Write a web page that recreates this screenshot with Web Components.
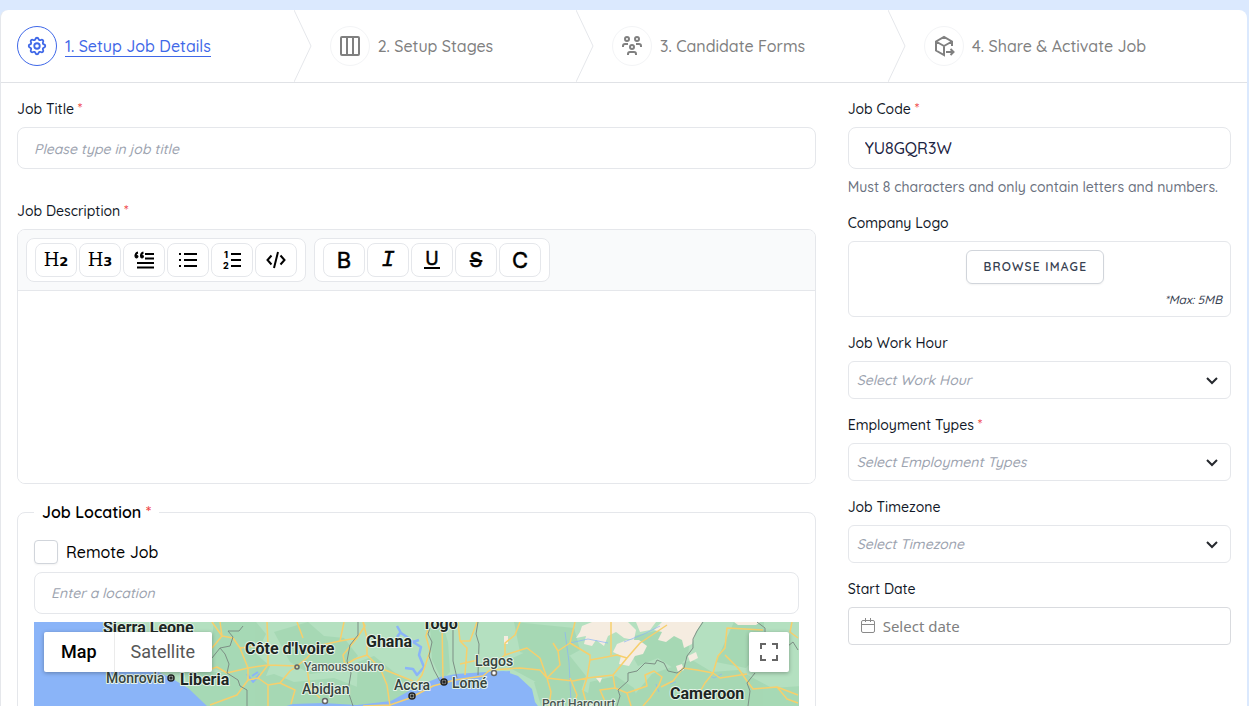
<!DOCTYPE html>
<html lang="en">
<head>
<meta charset="utf-8">
<meta name="viewport" content="width=device-width, initial-scale=1">
<title>Setup Job Details</title>
<style>
html, body { height: 100%; }
body { margin: 0; background: #dbe9fe; color: #111827; font: 500 16px/24px "Quicksand", "Lato", sans-serif; overflow: hidden; }
</style>
</head>
<body>
<job-setup-page></job-setup-page>

<template id="t-page">
  <style>
    :host { display: block; height: 100%; box-sizing: border-box; padding: 10px 2px 0 0; overflow-y: auto; scrollbar-width: none; }
    main { background: #fff; border-left: 1px solid #e5e7eb; border-radius: 8px 8px 0 0; min-height: 100%; box-sizing: border-box; }
    form { display: grid; grid-template-columns: repeat(3, minmax(0, 1fr)); gap: 32px; padding: 16px; }
    .primary { grid-column: span 2; display: flex; flex-direction: column; gap: 32px; min-width: 0; }
    .block { display: flex; flex-direction: column; gap: 16px; }
    .side { display: flex; flex-direction: column; gap: 16px; min-width: 0; }
  </style>
  <main>
    <step-bar>
      <step-item href="#details" icon="cog" active>1. Setup Job Details</step-item>
      <step-item href="#stages" icon="columns">2. Setup Stages</step-item>
      <step-item href="#forms" icon="people">3. Candidate Forms</step-item>
      <step-item href="#share" icon="box" last>4. Share &amp; Activate Job</step-item>
    </step-bar>
    <form>
      <div class="primary">
        <text-field label="Job Title" required placeholder="Please type in job title"></text-field>
        <div class="block">
          <rich-editor></rich-editor>
          <job-location></job-location>
        </div>
      </div>
      <div class="side">
        <text-field label="Job Code" required value="YU8GQR3W">Must 8 characters and only contain letters and numbers.</text-field>
        <logo-upload></logo-upload>
        <select-field label="Job Work Hour" placeholder="Select Work Hour"></select-field>
        <select-field label="Employment Types" required placeholder="Select Employment Types"></select-field>
        <select-field label="Job Timezone" placeholder="Select Timezone"></select-field>
        <date-field label="Start Date" placeholder="Select date"></date-field>
      </div>
    </form>
  </main>
</template>

<template id="t-location">
  <style>
    :host { display: block; }
    fieldset { margin: 0; padding: 16px; border: 1px solid #e5e7eb; border-radius: 8px; min-width: 0; }
    legend { padding: 0 8px; font: 600 16px/24px "Quicksand", "Lato", sans-serif; color: #000; }
    legend span { color: #ef4444; }
    .stack { display: flex; flex-direction: column; gap: 8px; }
    .remote { display: flex; align-items: center; gap: 8px; color: #000; }
    .remote input { appearance: none; margin: 0; width: 24px; height: 24px; border: 1px solid #d1d5db; border-radius: 4px; background: #fff; box-shadow: 0 1px 2px #0000000d; }
    .place { box-sizing: border-box; width: 100%; height: 42px; padding: 0 16px; border: 1px solid #e5e7eb; border-radius: 8px; font: 500 14px/20px "Quicksand", "Lato", sans-serif; }
    .place::placeholder { color: #9ca3af; font-style: italic; opacity: 1; }
  </style>
  <fieldset>
    <legend>Job Location <span>*</span></legend>
    <div class="stack">
      <label class="remote"><input type="checkbox">Remote Job</label>
      <input class="place" type="text" aria-label="Location" placeholder="Enter a location">
      <location-map></location-map>
    </div>
  </fieldset>
</template>

<template id="t-map">
  <style>
    :host { display: block; position: relative; height: 400px; overflow: hidden; background: #b0dfbd; font-family: Roboto, sans-serif; }
    .canvas { display: block; }
    .kinds { position: absolute; top: 10px; left: 10px; display: flex; background: #fff; border-radius: 2px; box-shadow: 0 1px 4px #0000004d; }
    .kinds button { border: 0; background: none; height: 40px; padding: 0 17px; font: 400 18px/40px Roboto, sans-serif; color: #565656; }
    .kinds button + button { box-shadow: inset 1px 0 #ebebeb; }
    .kinds .on { font-weight: 500; color: #000; }
    .full { position: absolute; top: 10px; right: 10px; width: 40px; height: 40px; padding: 11px; border: 0; border-radius: 2px; background: #fff; box-shadow: 0 1px 4px #0000004d; }
    .full svg { display: block; }
    .land2 { fill: #9dd4ad; opacity: .6; }
    .dry { fill: #f5ece0; }
    .road { fill: none; stroke: #f7cf6c; stroke-width: 1.5; stroke-linejoin: round; }
    .edge { fill: none; stroke: #7d8f85; stroke-width: 1; stroke-linejoin: round; }
    .water { fill: none; stroke: #8ab4f8; stroke-width: 1; stroke-linejoin: round; }
    text { paint-order: stroke; stroke: #e5f3e8; stroke-width: 2px; stroke-linejoin: round; fill: #1d2623; }
    .country { font-size: 16px; font-weight: 700; }
    .city { font-size: 14px; font-weight: 500; fill: #36433e; }
    .town { font-size: 12px; font-weight: 500; fill: #4a5752; }
  </style>
  <svg class="canvas" width="1600" height="400" viewBox="0 0 1600 400" aria-label="Map of West Africa">
    <rect width="1600" height="400" fill="#b4e0c0"/>
    <g class="land2">
      <path d="M180 0h42l10 12-10 20 14 12-8 20-20 8-14-22-20-4zM240 10l34-10 16 14 20 2 14 18-16 14-32 4-20-12zM150 50h40l20 10 30-8 20 8 40-4 26 10 34-6 18 8-10 14-140 10H160z"/>
      <path d="M324 40l16-6 20 16 18 10-6 14-50 8zM396 4l12-4 6 20 2 30-8 8-10-20zM470 40l30-14 36 8 16 20-10 30h-26l-14-24-26-14zM480 0l60 6 6 22-22 12-38-10zM556 60l26-6 18 12 10 30h-60z"/>
      <path d="M596 78l22-26 40-14 20 12 26-2 34 18 61-4v50H590zM600 14l34-8 22 8-2 20-12 14-18-12-20 8-8-14zM700 0h30v26l-18 20-30-6z"/>
      <path d="M500 60l14-2 26 6 20 10 6 20h-56z"/>
    </g>
    <g class="dry">
      <path d="M548 4l10-4h36l8 8-2 10-10-2-8-6-8 4-4 10-8-6-4 6-8-2 2-8-10 2 4-6z"/>
      <path d="M583 22l10-4 12 0 8 6-4 8-8 2-6 10-10-2 2-8-8-4z"/>
      <path d="M628 0h40l-6 10-4 12-8 4-2-8-8-4-8 6-8-2 4-8-8-2zM654 34l8-4 2 6-8 4zM470 14h4v8h-4zM562 56h6l-2 5zM602 0h20l-6 8-10 2z"/>
      <path d="M642 44l6-2 2 6-6 2zM700 0h26l-4 3h-18z"/>
    </g>
    <path d="M0 0H76l10 10 8 20 18 14 25 12 17 10 19 18 16 18 22 4 22-16 26-8 30-1 34 2 34-4 25-14 24-10 16-3 30-2 18-1 14 5 14 13 3 13 10 14 8 36 24 6 60-2 24 60 0 200H0z" fill="#8ab4f8"/>
    <g class="water">
      <path d="M363 4l4 7 6 4 6 5 8 5-2 8 5 12-7 8-4-6-8-1M366 11l-3 4M379 20l6-2" stroke-width="2.500"/>
      <path d="M213 52l6 8 7-8M224 50l-6 4M462 51l14-1" stroke-width="2"/>
      <path d="M590 20l20-8 16-8M536 21l18-4 20 4M531 10l4 30 2 40M642 60l-6 2M676 54l4 2 8-4M622 62l3 8" opacity=".7"/>
    </g>
    <g class="road">
      <path d="M178 0l10 14 11 2 7 10 8 20-21 5-10-6-12 4M186 0l2 14-10 12M214 46l20-3 29 1 10-8 10-12 23-5 17-3-14 17 2 10M233 0l1 23v20l-10 13 10 7v21M234 63l12-2 10-12 7-5M246 61l15 7-4 14M263 0l6 16M273 46l3 20 10 10M276 66l20 6 18-4M214 46v12l-11 15-27 10M206 26l28-3M214 58l10-2M311 43l-18 4-20-3"/>
      <path d="M306 19l4-19M323 16l8-12-2-4M329 0l4 16v17l13 13 33 13M333 33l-12 4-10 6M346 46l7 17 3 21M329 84l27-1 20-7 23-12 22-6 28-4 7-6 30-2 20 2 7 8M396 0l-4 14 4 15-8 24-10 14M408 0l1 59M424 0l2 19 7 7-2 27M443 0l-7 19-10 0M426 42l18-4M486 0l-5 13-10 8v12l-10 8-14 4M471 33l22-7 13 10 7 20"/>
      <path d="M541 0l-5 21-12 8 2 14-13 13M519 21l5 8M536 21l20 12v5l27-5 10 3 13-15 27-18M577 0v33M556 38l-3 18-14 3-26-3M553 56l26-3 14-17M536 56l7 17-4 11M553 56l-4 13 4 15M579 53l2 13-15 2 7 16M513 56l4 14-2 14M581 66l12 5 20-7-2-11 9-4 8 6-3 8-9 13-7 8M593 71l4 13"/>
      <path d="M639 59l10-13 14 2 16 3 5-17 7-8 2-20 36 2M691 33l13 13 9 13M679 51l7 5 27-4M679 51l-8 10-8 14M713 59l6 8 24-2 21 8M758 0l-2 10 8 6M639 59l-12 6M743 65l10 12 11 4"/>
    </g>
    <g class="edge">
      <path d="M209 4l-4 5-11 0 5 6-3 9-10 2 5 6 4 10-2 9 11 7 2 6 7 4v16M186 26l-8 10M324 0v13l-8 10-3 16 4 12-3 18 5 15"/>
      <path d="M396 6l-2 6 4 8-3 14 5 14 6 11M419 0v39l4 17M444 0l-2 12 3 10-1 31"/>
      <path d="M669 0l-6 9-4 8v9l-6 8-3 12-7 5-9-2-4-8-7-3-2 4-10-1-8 8-9 2 0 8-10 9 2 6-3 10M723 0l8 6v10M721 51l-8 10 3 8-2 15M754 24l5-4 5 8"/>
    </g>
    <g fill="none" stroke="#222" stroke-width="1.500">
      <circle cx="137" cy="56" r="3" fill="#dfe8e2"/><circle cx="137" cy="56" r="1"/>
      <circle cx="378" cy="74" r="3" fill="#dfe8e2"/><circle cx="378" cy="74" r="1"/>
      <circle cx="410" cy="60" r="3" fill="#aaa"/><circle cx="410" cy="60" r="1"/>
      <g stroke="#666"><circle cx="263" cy="45" r="2"/><circle cx="460" cy="51" r="2.500" fill="#fff"/><circle cx="291" cy="79" r="2.500" fill="#fff"/></g>
    </g>
    <text class="country" x="69" y="11">Sierra Leone</text>
    <text class="country" x="146" y="63">Liberia</text>
    <text class="country" x="211" y="32">Côte d'Ivoire</text>
    <text class="country" x="332" y="25">Ghana</text>
    <text class="country" x="388" y="7">Togo</text>
    <text class="country" x="636" y="77">Cameroon</text>
    <text class="city" x="72" y="61">Monrovia</text>
    <text class="city" x="268" y="72">Abidjan</text>
    <text class="city" x="360" y="68">Accra</text>
    <text class="city" x="418" y="66">Lomé</text>
    <text class="city" x="441" y="44">Lagos</text>
    <text class="town" x="270" y="49">Yamoussoukro</text>
    <text class="town" x="508" y="86">Port Harcourt</text>
  </svg>
  <div class="kinds"><button type="button" class="on">Map</button><button type="button">Satellite</button></div>
  <button type="button" class="full" aria-label="Toggle fullscreen view"><svg width="18" height="18" viewBox="0 0 18 18" fill="#666"><path d="M0 0v6h2V2h4V0zM18 0h-6v2h4v4h2zM16 16h-4v2h6v-6h-2zM2 12H0v6h6v-2H2z"/></svg></button>
</template>

<script>
const FONT = '"Quicksand", "Lato", sans-serif';
const ICONS = {
  cog: '<path d="M10.325 4.317c.426-1.756 2.924-1.756 3.35 0a1.724 1.724 0 0 0 2.573 1.066c1.543-.94 3.31.826 2.37 2.37a1.724 1.724 0 0 0 1.065 2.572c1.756.426 1.756 2.924 0 3.35a1.724 1.724 0 0 0-1.066 2.573c.94 1.543-.826 3.31-2.37 2.37a1.724 1.724 0 0 0-2.572 1.065c-.426 1.756-2.924 1.756-3.35 0a1.724 1.724 0 0 0-2.573-1.066c-1.543.94-3.31-.826-2.37-2.37a1.724 1.724 0 0 0-1.065-2.572c-1.756-.426-1.756-2.924 0-3.35a1.724 1.724 0 0 0 1.066-2.573c-.94-1.543.826-3.31 2.37-2.37 1 .608 2.296.07 2.572-1.065z"/><circle cx="12" cy="12" r="3"/>',
  columns: '<rect x="3" y="3" width="18" height="18" rx="1"/><path d="M9 3v18M15 3v18"/>',
  people: '<circle cx="7" cy="5" r="2"/><circle cx="17" cy="5" r="2"/><circle cx="12" cy="13" r="2"/><path d="M3 13v-1a2 2 0 0 1 2-2h3M21 13v-1a2 2 0 0 0-2-2h-3M8 21v-1a2 2 0 0 1 2-2h4a2 2 0 0 1 2 2v1"/>',
  box: '<path d="M20 12V7.500l-8-4.500-8 4.500v9l8 4.500V12l8-4.500M12 12L4 7.500M14 18h7M18.500 15l3 3-3 3"/>'
};
const fromTemplate = id => document.getElementById(id).innerHTML;

class Base extends HTMLElement {
  connectedCallback() {
    if (!this.shadowRoot) this.attachShadow({ mode: 'open' }).innerHTML = this.render();
  }
  get star() { return this.hasAttribute('required') ? ' <i class="star">*</i>' : ''; }
}
const FIELD = `
  :host { display: flex; flex-direction: column; gap: 8px; }
  .label { font: 500 14px/20px ${FONT}; color: #111827; }
  .star { color: #ef4444; font-style: normal; }
`;

customElements.define('step-bar', class extends Base {
  render() {
    return `<style>
      :host { display: block; border-bottom: 1px solid #e0e2e6; }
      nav { display: flex; height: 72px; }
    </style><nav aria-label="Steps"><slot></slot></nav>`;
  }
});

customElements.define('step-item', class extends Base {
  render() {
    const active = this.hasAttribute('active');
    return `<style>
      :host { display: flex; flex: 1 1 auto; justify-content: space-between; padding-left: 18px; color: #808080; }
      :host([active]) { padding-left: 16px; color: #3f68e8; }
      :host([last]) { padding-right: 18px; }
      a { display: flex; align-items: center; gap: 8px; color: inherit; text-decoration: none; white-space: nowrap; }
      .disc { display: grid; place-items: center; width: 38px; height: 38px; border: 1px solid #f3f4f6; border-radius: 50%; }
      :host([active]) .disc { border-color: #3f68e8; }
      .disc svg { fill: none; stroke: currentColor; stroke-width: 2; }
      .text { font: 500 16px/20px ${FONT}; border-bottom: 1px solid transparent; }
      :host([active]) .text { border-color: currentColor; }
      .chevron { fill: none; stroke: #e5e7eb; }
    </style>
    <a href="${this.getAttribute('href')}"${active ? ' aria-current="step"' : ''}>
      <span class="disc"><svg width="${active ? 22 : 24}" height="${active ? 22 : 24}" viewBox="0 0 24 24">${ICONS[this.getAttribute('icon')]}</svg></span>
      <span class="text"><slot></slot></span>
    </a>
    ${this.hasAttribute('last') ? '' : '<svg class="chevron" width="18" height="72" viewBox="0 0 18 72"><path d="M0 0l17 36L0 72"/></svg>'}`;
  }
});

customElements.define('text-field', class extends Base {
  render() {
    return `<style>${FIELD}
      input { box-sizing: border-box; width: 100%; height: 42px; padding: 0 16px; border: 1px solid #e5e7eb; border-radius: 8px; background: #fff; font: 500 16px/24px ${FONT}; color: #1b2342; }
      input::placeholder { color: #9ca3af; font-size: 14px; font-style: italic; opacity: 1; }
      .hint { font-size: 14px; line-height: 20px; color: #6b7280; }
    </style>
    <label class="label" for="f">${this.getAttribute('label')}${this.star}</label>
    <input id="f" type="text" value="${this.getAttribute('value') || ''}" placeholder="${this.getAttribute('placeholder') || ''}">
    ${this.textContent.trim() ? '<div class="hint"><slot></slot></div>' : ''}`;
  }
});

customElements.define('select-field', class extends Base {
  render() {
    return `<style>${FIELD}
      .box { display: grid; }
      .box > * { grid-area: 1 / 1; }
      select { appearance: none; width: 100%; height: 38px; padding: 0 8px; border: 1px solid #e5e7eb; border-radius: 6px; background: #fff; font: italic 500 14px/20px ${FONT}; color: #9ca3af; }
      svg { justify-self: end; align-self: center; margin-right: 12px; fill: none; stroke: #26292e; stroke-width: 2; pointer-events: none; }
    </style>
    <label class="label" for="f">${this.getAttribute('label')}${this.star}</label>
    <div class="box"><select id="f"><option>${this.getAttribute('placeholder')}</option></select>
    <svg width="14" height="14" viewBox="0 0 14 14"><path d="M2 5l5 5 5-5"/></svg></div>`;
  }
});

customElements.define('date-field', class extends Base {
  render() {
    return `<style>${FIELD}
      .box { display: flex; align-items: center; gap: 8px; box-sizing: border-box; height: 38px; padding: 0 12px; border: 1px solid #d9dbdf; border-radius: 4px; }
      svg { fill: none; stroke: #8a8a8a; flex: none; }
      input { flex: 1; min-width: 0; border: 0; padding: 0; background: none; font: 400 15px/24px "Noto Sans", sans-serif; outline: 0; }
      input::placeholder { color: #808080; opacity: 1; }
    </style>
    <label class="label" for="f">${this.getAttribute('label')}</label>
    <div class="box"><svg width="14" height="16" viewBox="0 0 14 16"><rect x=".5" y="2.500" width="13" height="12" rx="1.500"/><path d="M.5 6.500h13M4.500 0v4M9.500 0v4"/></svg>
    <input id="f" type="text" placeholder="${this.getAttribute('placeholder')}"></div>`;
  }
});

customElements.define('logo-upload', class extends Base {
  render() {
    return `<style>${FIELD}
      .box { display: flex; flex-direction: column; align-items: center; gap: 8px; box-sizing: border-box; height: 76px; padding: 8px; border: 1px solid #e5e7eb; border-radius: 6px; }
      button { height: 34px; margin: 0 8px 0 0; padding: 0 16px; border: 1px solid #d1d5db; border-radius: 6px; background: #fff; font: 600 12px/16px ${FONT}; letter-spacing: .1em; text-transform: uppercase; color: #374151; box-shadow: 0 1px 2px #0000000d; flex: none; }
      small { align-self: flex-end; font: italic 500 12px/16px ${FONT}; color: #374151; }
    </style>
    <span class="label">Company Logo</span>
    <div class="box"><button type="button">Browse Image</button><small>*Max: 5MB</small></div>`;
  }
});

customElements.define('tool-button', class extends Base {
  render() {
    return `<style>
      :host { display: block; }
      button { display: grid; place-items: center; box-sizing: border-box; width: 42px; height: 34px; padding: 0; border: 1px solid #e5e7eb; border-radius: 8px; background: #fff; color: #000; font: 400 22px/24px Inter, sans-serif; }
      ::slotted(svg) { display: block; fill: none; stroke: #000; stroke-width: 2; }
    </style><button type="button" aria-label="${this.getAttribute('name')}"><slot></slot></button>`;
  }
});

customElements.define('rich-editor', class extends Base {
  render() {
    return `<style>${FIELD}
      .frame { border: 1px solid #e5e7eb; border-radius: 8px; overflow: hidden; }
      .bar { display: flex; gap: 8px; padding: 8px; background: #f9fafb; border-bottom: 1px solid #e5e7eb; }
      .group { display: flex; gap: 2px; padding: 4px 8px; border: 1px solid #e5e7eb; border-radius: 8px; background: #fff; }
      textarea { display: block; box-sizing: border-box; width: 100%; height: 192px; padding: 12px 16px; border: 0; resize: none; font: 500 16px/24px ${FONT}; outline: 0; }
      .h { display: flex; align-items: baseline; font: 400 18px/24px "DejaVu Serif", serif; }
      .h b { font: 700 13px/16px "DejaVu Sans", sans-serif; }
      .i { font: italic 400 22px/24px "Liberation Mono", monospace; padding-top: 2px; -webkit-text-stroke: .5px #000; }
      .u { font-size: 18px; line-height: 16px; border-bottom: 2px solid #000; padding: 0 1px; -webkit-text-stroke: .5px #000; }
      .s { text-decoration: line-through 2px; font-size: 20px; -webkit-text-stroke: .5px #000; }
      .b { -webkit-text-stroke: .5px #000; }
      svg text { font: 800 9px Inter, sans-serif; stroke: none; fill: #000; }
    </style>
    <label class="label" for="d">Job Description <i class="star">*</i></label>
    <div class="frame">
      <div class="bar">
        <div class="group">
          <tool-button name="Heading 2"><span class="h">H<b>2</b></span></tool-button>
          <tool-button name="Heading 3"><span class="h">H<b>3</b></span></tool-button>
          <tool-button name="Quote"><svg width="22" height="18" viewBox="0 0 22 18"><path d="M12 3h9M12 7.500h9M4 12h17M4 16.500h17"/><path d="M5 1.500Q2.500 2 2.500 5M10.500 1.500Q8 2 8 5"/><circle cx="3.500" cy="5.500" r="1.500" fill="#000" stroke-width="1"/><circle cx="9" cy="5.500" r="1.500" fill="#000" stroke-width="1"/></svg></tool-button>
          <tool-button name="Bulleted list"><svg width="20" height="18" viewBox="0 0 20 18"><path d="M6 3h13M6 9h13M6 15h13M1 3h2M1 9h2M1 15h2"/></svg></tool-button>
          <tool-button name="Numbered list"><svg width="20" height="24" viewBox="0 0 20 24"><path d="M9 6h10M9 12h10M9 18h10"/><text x="2" y="10">1</text><text x="1" y="21">2</text></svg></tool-button>
          <tool-button name="Code"><svg width="20" height="18" viewBox="0 0 20 18"><path d="M5.500 4.500L1.500 9l4 4.500M14.500 4.500l4 4.500-4 4.500M12 1L8 17"/></svg></tool-button>
        </div>
        <div class="group">
          <tool-button name="Bold"><span class="b">B</span></tool-button>
          <tool-button name="Italic"><span class="i">I</span></tool-button>
          <tool-button name="Underline"><span class="u">U</span></tool-button>
          <tool-button name="Strikethrough"><span class="s">S</span></tool-button>
          <tool-button name="Clear format"><span class="b">C</span></tool-button>
        </div>
      </div>
      <textarea id="d"></textarea>
    </div>`;
  }
});

customElements.define('location-map', class extends Base { render() { return fromTemplate('t-map'); } });
customElements.define('job-location', class extends Base { render() { return fromTemplate('t-location'); } });
customElements.define('job-setup-page', class extends Base { render() { return fromTemplate('t-page'); } });
</script>
</body>
</html>
